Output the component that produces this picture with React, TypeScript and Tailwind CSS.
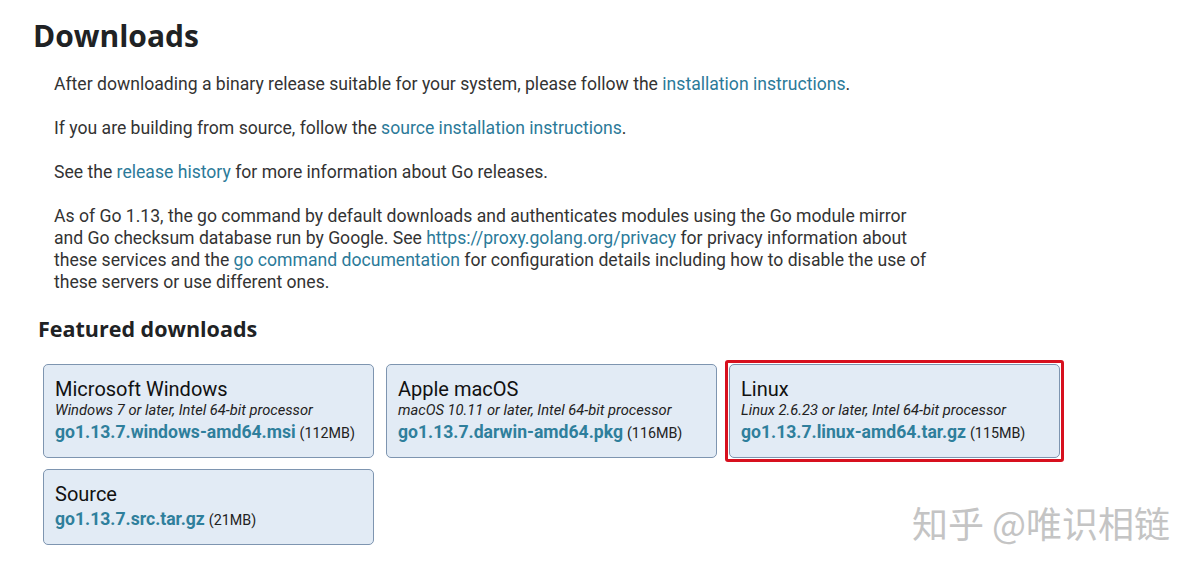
import React from 'react';

const links = 'text-[#2b7a99]';

const Card = ({ title, sub, file, size, highlight }: { title: string; sub?: string; file: string; size: string; highlight?: boolean }) => (
  <div className={highlight ? 'rounded-[3px] border-[3px] border-[#d7101e] p-px -m-1' : ''}>
    <div className="w-[331px] rounded-[5px] border border-[#7e95b0] bg-[#e2ebf5] px-[11px] pt-[12px] pb-[13px]">
      <div className="text-[20px] leading-[24px] text-[#111]">{title}</div>
      {sub && <div className="text-[14.7px] italic leading-[18px] text-[#222]">{sub}</div>}
      <div className="mt-[2px] leading-[22px]">
        <span className="text-[17.6px] font-bold text-[#2f7f9c]">{file}</span>{' '}
        <span className="text-[14.3px] text-[#222]">{size}</span>
      </div>
    </div>
  </div>
);

export default function App() {
  return (
    <div className="relative h-[573px] w-[1200px] overflow-hidden bg-white font-['Roboto',sans-serif] text-[#202224]">
      <h1 className="pl-[33px] pt-[16px] font-['Open_Sans',sans-serif] text-[30px] font-bold leading-[40px] text-[#202224]">
        Downloads
      </h1>
      <div className="pl-[54px] pt-[17px] text-[17.6px] leading-[22px] text-[#333]">
        <p>
          After downloading a binary release suitable for your system, please follow the{' '}
          <span className={links}>installation instructions</span>.
        </p>
        <p className="mt-[22px]">
          If you are building from source, follow the <span className={links}>source installation instructions</span>.
        </p>
        <p className="mt-[22px]">
          See the <span className={links}>release history</span> for more information about Go releases.
        </p>
        <p className="mt-[22px] whitespace-nowrap">
          As of Go 1.13, the go command by default downloads and authenticates modules using the Go module mirror
          <br />
          and Go checksum database run by Google. See <span className={links}>https://proxy.golang.org/privacy</span> for
          privacy information about
          <br />
          these services and the <span className={links}>go command documentation</span> for configuration details
          including how to disable the use of
          <br />
          these servers or use different ones.
        </p>
      </div>
      <h2 className="pl-[38px] pt-[22px] font-['Open_Sans',sans-serif] text-[21.5px] font-bold leading-[28px] text-[#202224]">
        Featured downloads
      </h2>
      <div className="grid w-fit grid-cols-[331px_331px_331px] gap-x-3 gap-y-[11px] pl-[43px] pt-[21px]">
        <Card
          title="Microsoft Windows"
          sub="Windows 7 or later, Intel 64-bit processor"
          file="go1.13.7.windows-amd64.msi"
          size="(112MB)"
        />
        <Card
          title="Apple macOS"
          sub="macOS 10.11 or later, Intel 64-bit processor"
          file="go1.13.7.darwin-amd64.pkg"
          size="(116MB)"
        />
        <Card
          title="Linux"
          sub="Linux 2.6.23 or later, Intel 64-bit processor"
          file="go1.13.7.linux-amd64.tar.gz"
          size="(115MB)"
          highlight
        />
        <Card title="Source" file="go1.13.7.src.tar.gz" size="(21MB)" />
      </div>
      <div className="absolute left-[912px] top-[500px] font-['Noto_Sans_CJK_SC',sans-serif] text-[36px] leading-[44px] text-[#c4c4c4] [text-shadow:1px_1px_0_#fff]">
        知乎 @唯识相链
      </div>
    </div>
  );
}
